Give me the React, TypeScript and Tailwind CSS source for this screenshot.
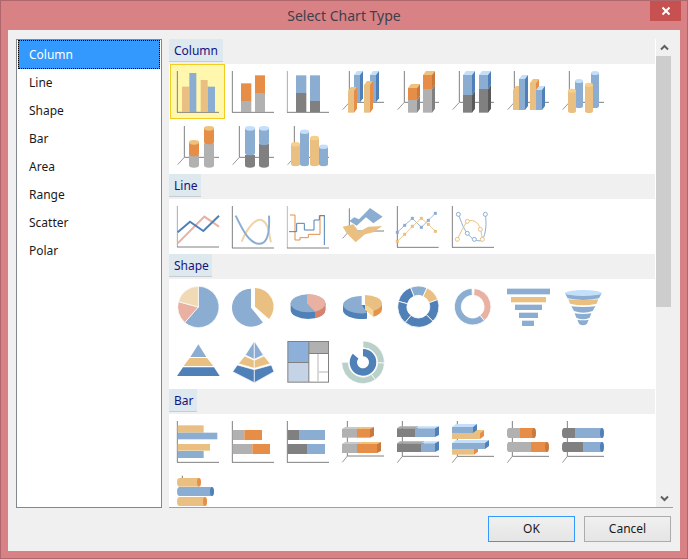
import React from 'react';

const TAN = '#e9c082';
const BLUE = '#8cadd2';
const DBLUE = '#4f81b8';
const LBLUE = '#c4dffa';
const ORANGE = '#e68e47';
const CAPTAN = '#eec27c';
const GRAY = '#b1b1b1';
const DGRAY = '#808080';
const RED = '#e9b1a1';
const AXIS = '#808080';

// all icon coordinates are in 3x units, one cell is 165 x 165
function Icon({ o, className = '', children }: { o: [number, number]; className?: string; children: React.ReactNode }) {
  return (
    <svg className={`block w-[55px] h-[55px] shrink-0 ${className}`} viewBox={`${o[0]} ${o[1]} 165 165`}>
      {children}
    </svg>
  );
}

function Axis2D({ x, y0, y1, x1, left = AXIS }: { x: number; y0: number; y1: number; x1: number; left?: string }) {
  return (
    <>
      <line x1={x} y1={y0} x2={x} y2={y1} stroke={left} strokeWidth={3} />
      <line x1={x - 1} y1={y1} x2={x1} y2={y1} stroke={AXIS} strokeWidth={3} />
    </>
  );
}

function Axis3D({ x, y0, y1, x1, dx = 20, dy = 22 }: { x: number; y0: number; y1: number; x1: number; dx?: number; dy?: number }) {
  return (
    <>
      <line x1={x} y1={y0} x2={x} y2={y1} stroke={AXIS} strokeWidth={3} />
      <line x1={x} y1={y1} x2={x1} y2={y1} stroke={AXIS} strokeWidth={3} />
      <line x1={x} y1={y1} x2={x - dx} y2={y1 + dy} stroke="#999" strokeWidth={3} />
    </>
  );
}

function Rect({ x0, x1, y0, y1, c }: { x0: number; x1: number; y0: number; y1: number; c: string }) {
  return <rect x={x0} y={y0} width={x1 - x0} height={y1 - y0} fill={c} />;
}

function Box({ x0, x1, top, bot, front, cap, side, dx = 9, dy = 12 }: { x0: number; x1: number; top: number; bot: number; front: string; cap?: string; side: string; dx?: number; dy?: number }) {
  return (
    <>
      {cap && <polygon points={`${x0},${top} ${x0 + dx},${top - dy} ${x1 + dx},${top - dy} ${x1},${top}`} fill={cap} />}
      <polygon points={`${x1},${top} ${x1 + dx},${top - dy} ${x1 + dx},${bot - dy} ${x1},${bot}`} fill={side} />
      <rect x={x0} y={top} width={x1 - x0} height={bot - top} fill={front} />
    </>
  );
}

function Cyl({ x0, x1, top, bot, c, cap }: { x0: number; x1: number; top: number; bot: number; c: string; cap?: string }) {
  const cx = (x0 + x1) / 2;
  const rx = (x1 - x0) / 2;
  const ry = Math.min(7, rx / 2);
  return (
    <>
      <rect x={x0} y={top} width={x1 - x0} height={bot - top} fill={c} />
      <ellipse cx={cx} cy={bot} rx={rx} ry={ry} fill={c} />
      {cap && <ellipse cx={cx} cy={top} rx={rx} ry={ry} fill={cap} />}
    </>
  );
}

function HCyl({ x0, x1, y0, y1, c, end }: { x0: number; x1: number; y0: number; y1: number; c: string; end?: string }) {
  const cy = (y0 + y1) / 2;
  const ry = (y1 - y0) / 2;
  return (
    <>
      <ellipse cx={x0 + 6} cy={cy} rx={8} ry={ry} fill={c} />
      <rect x={x0 + 6} y={y0} width={x1 - x0 - 6} height={y1 - y0} fill={c} />
      {end && <ellipse cx={x1} cy={cy} rx={6} ry={ry} fill={end} />}
    </>
  );
}

function sector(cx: number, cy: number, r0: number, r1: number, a0: number, a1: number) {
  const pt = (r: number, a: number) => {
    const t = (a * Math.PI) / 180;
    return `${(cx + r * Math.sin(t)).toFixed(2)} ${(cy - r * Math.cos(t)).toFixed(2)}`;
  };
  const large = a1 - a0 > 180 ? 1 : 0;
  if (r0 === 0) return `M${cx} ${cy} L${pt(r1, a0)} A${r1} ${r1} 0 ${large} 1 ${pt(r1, a1)} Z`;
  return `M${pt(r0, a0)} L${pt(r1, a0)} A${r1} ${r1} 0 ${large} 1 ${pt(r1, a1)} L${pt(r0, a1)} A${r0} ${r0} 0 ${large} 0 ${pt(r0, a0)} Z`;
}

function Band({ x0, x1, t, b, i, c }: { x0: number; x1: number; t: number; b: number; i: number; c: string }) {
  return <path d={`M${x0} ${t} L${x0 + i} ${b - 5} Q${(x0 + x1) / 2} ${b + 5} ${x1 - i} ${b - 5} L${x1} ${t} Q${(x0 + x1) / 2} ${t + 4} ${x0} ${t} Z`} fill={c} />;
}

const columnIcons = [
  <Icon o={[15, 12]} key="c1" className="bg-[#fff7ad] ring-1 ring-inset ring-[#f2cc1f]">
    <Axis2D x={37} y0={33} y1={157} x1={162} />
    <Rect x0={51} x1={73} y0={80} y1={156} c={TAN} />
    <Rect x0={73} x1={94} y0={39} y1={156} c={BLUE} />
    <Rect x0={107} x1={128} y0={60} y1={156} c={TAN} />
    <Rect x0={128} x1={150} y0={80} y1={156} c={BLUE} />
  </Icon>,
  <Icon o={[180, 12]} key="c2">
    <Axis2D x={202} y0={33} y1={157} x1={327} />
    <Rect x0={228} x1={259} y0={70} y1={123} c={ORANGE} />
    <Rect x0={228} x1={259} y0={123} y1={156} c={GRAY} />
    <Rect x0={270} x1={300} y0={46} y1={99} c={ORANGE} />
    <Rect x0={270} x1={300} y0={99} y1={156} c={GRAY} />
  </Icon>,
  <Icon o={[345, 12]} key="c3">
    <Axis2D x={367} y0={33} y1={157} x1={492} left="#aaa" />
    <Rect x0={393} x1={424} y0={46} y1={99} c={BLUE} />
    <Rect x0={393} x1={424} y0={99} y1={156} c={DGRAY} />
    <Rect x0={435} x1={465} y0={46} y1={123} c={BLUE} />
    <Rect x0={435} x1={465} y0={123} y1={156} c={DGRAY} />
  </Icon>,
  <Icon o={[510, 12]} key="c4">
    <Axis3D x={553} y0={33} y1={127} x1={657} />
    <Box x0={567} x1={585} top={45} bot={127} front={BLUE} cap={LBLUE} side={DBLUE} />
    <Box x0={615} x1={633} top={45} bot={127} front={BLUE} cap={LBLUE} side={DBLUE} />
    <Box x0={549} x1={567} top={93} bot={158} front={TAN} cap={CAPTAN} side={ORANGE} />
    <Box x0={597} x1={615} top={75} bot={158} front={TAN} cap={CAPTAN} side={ORANGE} />
  </Icon>,
  <Icon o={[-30, 192]} key="c5">
    <Axis3D x={13} y0={213} y1={307} x1={117} />
    <Box x0={24} x1={51} top={300} bot={338} front={GRAY} side={DGRAY} />
    <Box x0={24} x1={51} top={264} bot={300} front={ORANGE} cap={CAPTAN} side="#c9793c" />
    <Box x0={69} x1={96} top={267} bot={338} front={GRAY} side={DGRAY} />
    <Box x0={69} x1={96} top={225} bot={267} front={ORANGE} cap={CAPTAN} side="#c9793c" />
  </Icon>,
  <Icon o={[135, 192]} key="c6">
    <Axis3D x={178} y0={213} y1={307} x1={282} />
    <Box x0={189} x1={216} top={285} bot={338} front={DGRAY} side="#5a5a5a" />
    <Box x0={189} x1={216} top={225} bot={285} front={BLUE} cap={LBLUE} side={DBLUE} />
    <Box x0={237} x1={264} top={267} bot={338} front={DGRAY} side="#5a5a5a" />
    <Box x0={237} x1={264} top={225} bot={267} front={BLUE} cap={LBLUE} side={DBLUE} />
  </Icon>,
  <Icon o={[300, 192]} key="c7">
    <Axis3D x={343} y0={213} y1={307} x1={447} />
    <Box x0={339} x1={357} top={270} bot={330} front={TAN} cap={CAPTAN} side={ORANGE} />
    <Box x0={357} x1={375} top={237} bot={330} front={BLUE} cap={LBLUE} side={DBLUE} />
    <Box x0={390} x1={408} top={249} bot={330} front={TAN} cap={CAPTAN} side={ORANGE} />
    <Box x0={408} x1={426} top={270} bot={330} front={BLUE} cap={LBLUE} side={DBLUE} />
  </Icon>,
  <Icon o={[465, 192]} key="c8">
    <Axis3D x={508} y0={213} y1={307} x1={612} />
    <Cyl x0={525} x1={549} top={243} bot={318} c={BLUE} cap={LBLUE} />
    <Cyl x0={573} x1={597} top={219} bot={318} c={BLUE} cap={LBLUE} />
    <Cyl x0={504} x1={528} top={272} bot={333} c={TAN} cap="#f7cf8a" />
    <Cyl x0={555} x1={579} top={254} bot={333} c={TAN} cap="#f7cf8a" />
  </Icon>,
  <Icon o={[15, 177]} key="c9">
    <Axis3D x={58} y0={198} y1={292} x1={162} />
    <Cyl x0={72} x1={102} top={285} bot={316} c={GRAY} />
    <Cyl x0={72} x1={102} top={247} bot={282} c={ORANGE} cap={CAPTAN} />
    <Cyl x0={117} x1={147} top={250} bot={316} c={GRAY} />
    <Cyl x0={117} x1={147} top={205} bot={246} c={ORANGE} cap={CAPTAN} />
  </Icon>,
  <Icon o={[180, 177]} key="c10">
    <Axis3D x={223} y0={198} y1={292} x1={327} />
    <Cyl x0={240} x1={270} top={285} bot={316} c={DGRAY} />
    <Cyl x0={240} x1={270} top={205} bot={279} c={BLUE} cap={LBLUE} />
    <Cyl x0={282} x1={312} top={252} bot={316} c={DGRAY} />
    <Cyl x0={282} x1={312} top={205} bot={248} c={BLUE} cap={LBLUE} />
  </Icon>,
  <Icon o={[345, 177]} key="c11">
    <Axis3D x={388} y0={198} y1={292} x1={492} />
    <Cyl x0={405} x1={432} top={215} bot={312} c={BLUE} cap={LBLUE} />
    <Cyl x0={378} x1={405} top={253} bot={312} c={TAN} cap="#f7cf8a" />
    <Cyl x0={462} x1={489} top={260} bot={312} c={BLUE} cap={LBLUE} />
    <Cyl x0={435} x1={462} top={234} bot={312} c={TAN} cap="#f7cf8a" />
  </Icon>,
];

const line5Blue = [[16, 97], [38, 76], [61, 55], [88, 82], [109, 61], [130, 40]];
const line5Tan = [[16, 124], [38, 103], [61, 79], [88, 55], [109, 73], [130, 94]];

const lineIcons = [
  <Icon o={[15, 72]} key="l1">
    <Axis2D x={37} y0={93} y1={216} x1={162} left="#aaa" />
    <polyline points="38,205 118,125 162,155" fill="none" stroke={RED} strokeWidth={6} />
    <polyline points="38,172 75,140 115,168 162,122" fill="none" stroke={DBLUE} strokeWidth={6} />
  </Icon>,
  <Icon o={[180, 72]} key="l2">
    <Axis2D x={202} y0={93} y1={219} x1={327} />
    <path d="M230 200 C250 150 275 130 290 135 C312 145 312 180 318 202" fill="none" stroke="#f0d4a8" strokeWidth={6} />
    <path d="M212 122 C235 170 255 208 285 206 C312 204 314 160 312 122" fill="none" stroke={BLUE} strokeWidth={6} />
  </Icon>,
  <Icon o={[345, 72]} key="l3">
    <Axis2D x={367} y0={93} y1={219} x1={492} left="#bbb" />
    <polyline points="375,120 390,120 390,195 405,195 405,188 430,188 430,178 465,178 465,122 480,122" fill="none" stroke={ORANGE} strokeWidth={3} />
    <polyline points="372,170 395,170 395,145 418,145 418,165 447,165 447,135 463,135 463,122 478,122 478,210" fill="none" stroke={DBLUE} strokeWidth={3} />
  </Icon>,
  <Icon o={[510, 72]} key="l4">
    <Axis3D x={553} y0={100} y1={168} x1={657} />
    <polygon points="553,138 568,127 582,133 615,99 653,125 625,145 603,127 575,152" fill={BLUE} />
    <polygon points="533,155 565,148 582,170 610,155 652,153 625,172 600,178 572,202 545,175" fill={TAN} />
  </Icon>,
  <Icon o={[-6, -3]} key="l5">
    <Axis2D x={16} y0={18} y1={142} x1={140} />
    <polyline points={line5Blue.join(' ')} fill="none" stroke={BLUE} strokeWidth={2.5} />
    <polyline points={line5Tan.join(' ')} fill="none" stroke={TAN} strokeWidth={2.5} />
    {line5Blue.map(([x, y]) => (
      <rect key={x} x={x - 4.5} y={y - 4.5} width={9} height={9} fill={BLUE} />
    ))}
    {line5Tan.map(([x, y]) => (
      <rect key={x} x={x - 4.5} y={y - 4.5} width={9} height={9} fill={TAN} />
    ))}
  </Icon>,
  <Icon o={[159, -3]} key="l6">
    <Axis2D x={181} y0={18} y1={142} x1={306} />
    <path d="M199 43 C208 65 215 88 226 100 C235 110 240 118 247 118 C255 122 268 126 272 118 C282 100 284 70 280 43" fill="none" stroke={BLUE} strokeWidth={3} />
    <path d="M196 118 C205 100 215 78 226 64 C240 58 258 62 265 88 C268 98 270 108 271 118" fill="none" stroke={TAN} strokeWidth={3} />
    {[[199, 43], [226, 100], [247, 118], [280, 43]].map(([x, y]) => (
      <circle key={x} cx={x} cy={y} r={6} fill="#fff" stroke={BLUE} strokeWidth={3} />
    ))}
    {[[196, 118], [226, 64], [265, 88], [271, 118]].map(([x, y]) => (
      <circle key={x} cx={x} cy={y} r={6} fill="#fff" stroke={TAN} strokeWidth={3} />
    ))}
  </Icon>,
];

const shapeIcons = [
  <Icon o={[15, 57]} key="s1">
    <g stroke="#fff" strokeWidth={2}>
      <path d={sector(100, 141, 0, 62, 0, 221)} fill={BLUE} />
      <path d={sector(100, 141, 0, 62, 221, 285)} fill={RED} />
      <path d={sector(100, 141, 0, 62, 285, 360)} fill="#f0d9b5" />
    </g>
  </Icon>,
  <Icon o={[180, 57]} key="s2">
    <path d={sector(258, 143, 0, 57, 141, 360)} fill={BLUE} />
    <path d={sector(270, 140, 0, 56, 0, 131)} fill={TAN} />
  </Icon>,
  <Icon o={[345, 57]} key="s3">
    <path d="M377 130 V150 A52 27 0 0 0 481 150 V130 Z" fill={DBLUE} />
    <path d="M450 155 V175 A52 27 0 0 0 481 150 V130 Z" fill="#d9826a" />
    <ellipse cx={429} cy={130} rx={52} ry={27} fill={BLUE} />
    <path d="M426 130 V103 A52 27 0 0 1 481 130 A52 27 0 0 1 450 155 Z" fill={RED} />
  </Icon>,
  <Icon o={[510, 57]} key="s4">
    <path d="M534 135 V153 A56 27 0 0 0 606 176 V135 Z" fill={DBLUE} />
    <path d="M590 108 A56 27 0 0 0 534 135 A56 27 0 0 0 606 159 L590 134 Z" fill={BLUE} />
    <path d="M600 132 L625 152 V170 L600 150 Z" fill="#f8d594" />
    <path d="M625 152 V170 A51 26 0 0 0 651 149 V131 Z" fill="#e3934c" />
    <path d="M600 132 V105 A51 26 0 0 1 651 131 A51 26 0 0 1 625 152 Z" fill={TAN} />
  </Icon>,
  <Icon o={[-30, 27]} key="s5">
    <g stroke="#fff" strokeWidth={2.5}>
      <path d={sector(55, 110, 34, 62, -75, -22)} fill={DBLUE} />
      <path d={sector(55, 110, 34, 62, -22, 25)} fill={BLUE} />
      <path d={sector(55, 110, 34, 62, 25, 70)} fill={TAN} />
      <path d={sector(55, 110, 34, 62, 70, 135)} fill={DBLUE} />
      <path d={sector(55, 110, 34, 62, 135, 220)} fill={DBLUE} />
      <path d={sector(55, 110, 34, 62, 220, 285)} fill={DBLUE} />
    </g>
  </Icon>,
  <Icon o={[135, 27]} key="s6">
    <g stroke="#fff" strokeWidth={2.5}>
      <path d={sector(218, 110, 34, 55, 5, 140)} fill={RED} />
      <path d={sector(218, 110, 34, 55, 140, 358)} fill={BLUE} />
    </g>
  </Icon>,
  <Icon o={[300, 27]} key="s7">
    <Rect x0={321} x1={450} y0={54} y1={58} c="#d6e1ee" />
    <Rect x0={321} x1={450} y0={57} y1={73} c={BLUE} />
    <Rect x0={333} x1={438} y0={81} y1={97} c={TAN} />
    <Rect x0={345} x1={426} y0={104} y1={120} c={BLUE} />
    <Rect x0={357} x1={414} y0={128} y1={144} c={BLUE} />
    <Rect x0={366} x1={402} y0={152} y1={168} c={BLUE} />
  </Icon>,
  <Icon o={[465, 27]} key="s8">
    <Band x0={495} x1={605} t={70} b={90} i={8} c={BLUE} />
    <Band x0={505} x1={595} t={88} b={106} i={5} c={TAN} />
    <Band x0={514} x1={586} t={109} b={128} i={8} c={BLUE} />
    <Band x0={524} x1={574} t={130} b={148} i={5} c={BLUE} />
    <Band x0={532} x1={566} t={149} b={166} i={5} c={BLUE} />
    <ellipse cx={550} cy={69} rx={55} ry={9} fill={LBLUE} />
  </Icon>,
  <Icon o={[15, 222]} key="s9">
    <polygon points="100,253 124,291 76,291" fill={BLUE} />
    <polygon points="74,294 126,294 145,318 56,318" fill={TAN} />
    <polygon points="54,322 147,322 164,348 36,348" fill={DBLUE} />
  </Icon>,
  <Icon o={[180, 222]} key="s10">
    <g stroke="#fff" strokeWidth={2}>
      <polygon points="268,243 241,285 268,298" fill={BLUE} />
      <polygon points="268,243 295,285 268,298" fill={BLUE} />
      <polygon points="239,288 268,301 268,325 220,311" fill={TAN} />
      <polygon points="297,288 268,301 268,325 316,311" fill={TAN} />
      <polygon points="217,315 268,329 268,368 203,335" fill={DBLUE} />
      <polygon points="319,315 268,329 268,368 327,335" fill={DBLUE} />
    </g>
  </Icon>,
  <Icon o={[345, 222]} key="s11">
    <Rect x0={367} x1={492} y0={243} y1={368} c={DGRAY} />
    <Rect x0={370} x1={430} y0={246} y1={306} c="#8cb0da" />
    <Rect x0={433} x1={489} y0={246} y1={279} c={GRAY} />
    <Rect x0={370} x1={430} y0={309} y1={365} c="#c4d4e6" />
    <Rect x0={433} x1={489} y0={282} y1={365} c="#fff" />
    <Rect x0={457} x1={461} y0={282} y1={365} c="#c8c8c8" />
    <Rect x0={461} x1={489} y0={334} y1={338} c="#c8c8c8" />
  </Icon>,
  <Icon o={[510, 222]} key="s12">
    <g stroke="#fff" strokeWidth={2}>
      <path d={sector(594, 307, 44, 64, 0, 92)} fill="#b9d1c9" />
      <path d={sector(594, 307, 44, 64, 92, 145)} fill="#b9d1c9" />
      <path d={sector(594, 307, 44, 64, 145, 270)} fill="#b9d1c9" />
    </g>
    <path d={sector(594, 307, 18, 40, 0, 310)} fill={DBLUE} />
  </Icon>,
];

const barIcons = [
  <Icon o={[15, 87]} key="b1">
    <Axis2D x={37} y0={108} y1={232} x1={162} />
    <Rect x0={38} x1={116} y0={121} y1={143} c={TAN} />
    <Rect x0={38} x1={157} y0={143} y1={163} c={BLUE} />
    <Rect x0={38} x1={135} y0={177} y1={197} c={TAN} />
    <Rect x0={38} x1={116} y0={198} y1={219} c={BLUE} />
  </Icon>,
  <Icon o={[180, 87]} key="b2">
    <Axis2D x={202} y0={108} y1={232} x1={327} />
    <Rect x0={203} x1={238} y0={135} y1={165} c={GRAY} />
    <Rect x0={238} x1={291} y0={135} y1={165} c={ORANGE} />
    <Rect x0={203} x1={262} y0={177} y1={207} c={GRAY} />
    <Rect x0={262} x1={315} y0={177} y1={207} c={ORANGE} />
  </Icon>,
  <Icon o={[345, 87]} key="b3">
    <Axis2D x={367} y0={108} y1={232} x1={492} />
    <Rect x0={368} x1={402} y0={135} y1={165} c={DGRAY} />
    <Rect x0={402} x1={480} y0={135} y1={165} c={BLUE} />
    <Rect x0={368} x1={426} y0={177} y1={207} c={DGRAY} />
    <Rect x0={426} x1={480} y0={177} y1={207} c={BLUE} />
  </Icon>,
  <Icon o={[510, 87]} key="b4">
    <Axis3D x={547} y0={108} y1={213} x1={657} dx={15} dy={19} />
    <Box x0={531} x1={576} top={132} bot={158} front={GRAY} cap="#c9c9c9" side={GRAY} dx={9} dy={6} />
    <Box x0={576} x1={615} top={132} bot={158} front={ORANGE} cap={CAPTAN} side="#c9793c" dx={12} dy={6} />
    <Box x0={531} x1={576} top={177} bot={204} front={GRAY} cap="#c9c9c9" side={GRAY} dx={9} dy={6} />
    <Box x0={576} x1={636} top={177} bot={204} front={ORANGE} cap={CAPTAN} side="#c9793c" dx={12} dy={6} />
  </Icon>,
  <Icon o={[-30, 42]} key="b5">
    <Axis3D x={7} y0={63} y1={169} x1={117} dx={15} dy={19} />
    <Box x0={-9} x1={45} top={85} bot={111} front={DGRAY} cap="#a8a8a8" side={DGRAY} dx={9} dy={6} />
    <Box x0={45} x1={105} top={85} bot={111} front={BLUE} cap={LBLUE} side={DBLUE} dx={12} dy={6} />
    <Box x0={-9} x1={63} top={130} bot={156} front={DGRAY} cap="#a8a8a8" side={DGRAY} dx={9} dy={6} />
    <Box x0={63} x1={105} top={130} bot={156} front={BLUE} cap={LBLUE} side={DBLUE} dx={12} dy={6} />
  </Icon>,
  <Icon o={[135, 42]} key="b6">
    <Axis3D x={172} y0={63} y1={169} x1={282} dx={15} dy={19} />
    <Box x0={156} x1={240} top={99} bot={117} front={TAN} cap={CAPTAN} side={ORANGE} dx={12} dy={9} />
    <Box x0={156} x1={219} top={81} bot={99} front={BLUE} cap={LBLUE} side={DBLUE} dx={12} dy={9} />
    <Box x0={156} x1={222} top={147} bot={164} front={TAN} cap={CAPTAN} side={ORANGE} dx={12} dy={9} />
    <Box x0={156} x1={255} top={129} bot={147} front={BLUE} cap={LBLUE} side={DBLUE} dx={12} dy={9} />
  </Icon>,
  <Icon o={[300, 42]} key="b7">
    <Axis3D x={337} y0={63} y1={169} x1={447} dx={15} dy={19} />
    <HCyl x0={323} x1={402} y0={84} y1={114} c={ORANGE} end="#c9793c" />
    <HCyl x0={323} x1={360} y0={84} y1={114} c={GRAY} />
    <HCyl x0={323} x1={441} y0={126} y1={156} c={ORANGE} end="#c9793c" />
    <HCyl x0={323} x1={393} y0={126} y1={156} c={GRAY} />
  </Icon>,
  <Icon o={[465, 42]} key="b8">
    <Axis3D x={502} y0={63} y1={169} x1={612} dx={15} dy={19} />
    <HCyl x0={488} x1={606} y0={84} y1={114} c={BLUE} end={DBLUE} />
    <HCyl x0={488} x1={525} y0={84} y1={114} c={DGRAY} />
    <HCyl x0={488} x1={606} y0={126} y1={156} c={BLUE} end={DBLUE} />
    <HCyl x0={488} x1={549} y0={126} y1={156} c={DGRAY} />
  </Icon>,
  <Icon o={[15, 252]} key="b9">
    <line x1={52} y1={272} x2={52} y2={300} stroke={AXIS} strokeWidth={3} />
    <HCyl x0={38} x1={102} y0={279} y1={305} c={TAN} end={ORANGE} />
    <HCyl x0={38} x1={141} y0={306} y1={333} c={BLUE} end={DBLUE} />
    <HCyl x0={38} x1={120} y0={336} y1={363} c={TAN} end={ORANGE} />
  </Icon>,
];

const sections = [
  { name: 'Column', width: 'w-[54px]', icons: columnIcons },
  { name: 'Line', width: 'w-[32px]', icons: lineIcons },
  { name: 'Shape', width: 'w-[43px]', icons: shapeIcons },
  { name: 'Bar', width: 'w-[28px]', icons: barIcons },
];

const chartTypes = ['Line', 'Shape', 'Bar', 'Area', 'Range', 'Scatter', 'Polar'];

export default function App() {
  return (
    <div className="w-[688px] h-[559px] bg-[#d98286] border border-[#b0676c] flex flex-col text-[12px] text-[#1a1a1a] font-['Noto_Sans',sans-serif] overflow-hidden">
      {/* Title bar */}
      <div className="relative h-[29px] shrink-0 flex items-center justify-center text-[14px] text-[#3f3f4a]">
        Select Chart Type
        <div className="absolute right-[6px] top-0 w-[31px] h-[20px] bg-[#c75050] flex items-center justify-center">
          <svg width="10" height="10" viewBox="0 0 10 10">
            <path d="M1.5 1.5 L8.5 8.5 M8.5 1.5 L1.5 8.5" stroke="#fff" strokeWidth="2" />
          </svg>
        </div>
      </div>

      {/* Client area */}
      <div className="mx-[7px] mb-[7px] flex-1 min-h-0 bg-[#f0f0f0] flex flex-col px-[8px] pt-[9px]">
        <div className="flex gap-[7px] h-[469px] shrink-0">
          {/* Type list */}
          <div className="w-[146px] shrink-0 bg-white border border-[#828790] px-[1px]">
            <div className="h-[29px] pl-[10px] flex items-center bg-[#3399ff] text-white border border-dotted border-black">Column</div>
            {chartTypes.map((t) => (
              <div key={t} className="h-[28px] pl-[11px] flex items-center">{t}</div>
            ))}
          </div>

          {/* Gallery */}
          <div className="flex-1 min-w-0 flex border-b border-[#a0a0a0] -mr-[1px]">
            <div className="w-[487px] shrink-0 overflow-hidden bg-white border-r border-white">
              {sections.map((s) => (
                <div key={s.name}>
                  <div className="h-[25px] bg-[#f0f0f0]">
                    <div className={`flex h-[23px] items-center pl-[5px] pt-[1px] bg-[#dde8ef] border-b border-[#c5cdd3] text-[#14147d] ${s.width}`}>
                      {s.name}
                    </div>
                  </div>
                  <div className="flex flex-wrap pl-[1px]">{s.icons}</div>
                </div>
              ))}
            </div>

            {/* Scrollbar */}
            <div className="w-[16px] shrink-0 flex flex-col bg-[#f0f0f0]">
              <div className="h-[17px] flex items-center justify-center">
                <svg width="9" height="7" viewBox="0 0 9 7">
                  <path d="M1 5.5 L4.5 2 L8 5.5" fill="none" stroke="#606060" strokeWidth="2" />
                </svg>
              </div>
              <div className="h-[251px] w-[15px] bg-[#cdcdcd]" />
              <div className="flex-1" />
              <div className="h-[17px] flex items-center justify-center">
                <svg width="9" height="7" viewBox="0 0 9 7">
                  <path d="M1 1.5 L4.5 5 L8 1.5" fill="none" stroke="#606060" strokeWidth="2" />
                </svg>
              </div>
            </div>
          </div>
        </div>

        {/* Buttons */}
        <div className="flex justify-end gap-[9px] mt-[8px] pr-[1px]">
          <button className="w-[87px] h-[26px] border border-[#3399ff] bg-gradient-to-b from-[#f0f0f0] to-[#e5e5e5]">OK</button>
          <button className="w-[87px] h-[26px] border border-[#acacac] bg-gradient-to-b from-[#f0f0f0] to-[#e5e5e5]">Cancel</button>
        </div>
      </div>
    </div>
  );
}
